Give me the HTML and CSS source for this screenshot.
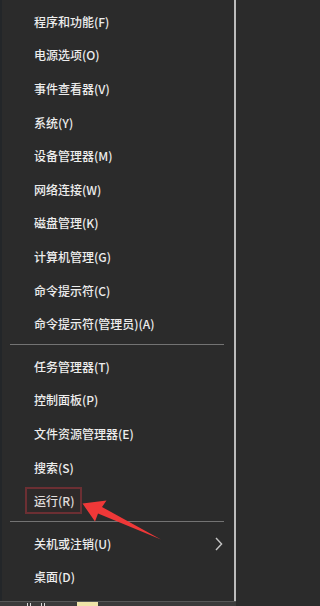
FILE: index.html
```html
<!DOCTYPE html>
<html lang="zh-CN">
<head>
<meta charset="utf-8">
<title>Win+X 菜单</title>
<link rel="stylesheet" href="styles.css">
</head>
<body>
<div class="screen">
  <div class="menu">
    <div class="group">
      <div class="item">程序和功能(F)</div>
      <div class="item">电源选项(O)</div>
      <div class="item">事件查看器(V)</div>
      <div class="item">系统(Y)</div>
      <div class="item">设备管理器(M)</div>
      <div class="item">网络连接(W)</div>
      <div class="item">磁盘管理(K)</div>
      <div class="item">计算机管理(G)</div>
      <div class="item">命令提示符(C)</div>
      <div class="item">命令提示符(管理员)(A)</div>
    </div>
    <div class="sep"></div>
    <div class="group">
      <div class="item">任务管理器(T)</div>
      <div class="item">控制面板(P)</div>
      <div class="item">文件资源管理器(E)</div>
      <div class="item">搜索(S)</div>
      <div class="item">运行(R)</div>
    </div>
    <div class="sep"></div>
    <div class="group">
      <div class="item">关机或注销(U)<svg class="chev" width="8" height="14" viewBox="0 0 8 14"><polyline points="1,1 6.6,7 1,13" fill="none" stroke="#c4c4c4" stroke-width="1.4"/></svg></div>
      <div class="item">桌面(D)</div>
    </div>
  </div>
  <div class="taskbar">
    <span class="tick t1"></span><span class="tick t2"></span><span class="tick t3"></span><span class="tick t4"></span><span class="note"></span>
  </div>
  <div class="highlight"></div>
  <svg class="arrow" width="236" height="606" viewBox="0 0 236 606">
    <polygon points="82.5,503.5 106.5,500.5 102,507 161,539.5 98,513.5 95,521.5" fill="#ef3838"/>
  </svg>
</div>
</body>
</html>
```

FILE: styles.css
```css
html, body {
  margin: 0;
  padding: 0;
  background: #2b2b2b;
}

.screen {
  position: relative;
  width: 236px;
  height: 606px;
  overflow: hidden;
  display: flex;
  flex-direction: column;
  font-family: "Noto Sans CJK SC", "Noto Sans", sans-serif;
  font-size: 12px;
  font-weight: 500;
  color: #ededed;
}

.menu {
  flex: 1;
  box-sizing: border-box;
  background: #2b2b2b;
  border-left: 2px solid #232629;
  border-right: 2px solid #bcbcbc;
  padding-top: 5px;
  display: flex;
  flex-direction: column;
}

.group {
  display: flex;
  flex-direction: column;
}

.item {
  height: 33.6px;
  display: flex;
  align-items: center;
  padding-left: 32px;
  padding-right: 11px;
  white-space: nowrap;
  line-height: 1;
}

.chev {
  margin-left: auto;
  display: block;
}

.sep {
  height: 1px;
  background: #737373;
  margin: 3px 10px 5px 8px;
}

.taskbar {
  height: 4px;
  border-top: 1px solid #575757;
  background: #3a3a3a;
  display: flex;
  align-items: flex-end;
}

.tick {
  width: 1px;
  height: 3px;
  background: #d8d8d8;
}

.t1 { margin-left: 27px; }
.t2 { margin-left: 2px; }
.t3 { margin-left: 10px; }
.t4 { margin-left: 2px; }

.note {
  width: 21px;
  height: 4px;
  margin-left: 32px;
  background: #efe3a8;
}

.highlight {
  position: absolute;
  left: 25px;
  top: 487px;
  width: 57px;
  height: 27px;
  box-sizing: border-box;
  border: 2px solid #6c2f33;
  background: rgba(90, 20, 20, 0.08);
}

.arrow {
  position: absolute;
  left: 0;
  top: 0;
  pointer-events: none;
}
```
